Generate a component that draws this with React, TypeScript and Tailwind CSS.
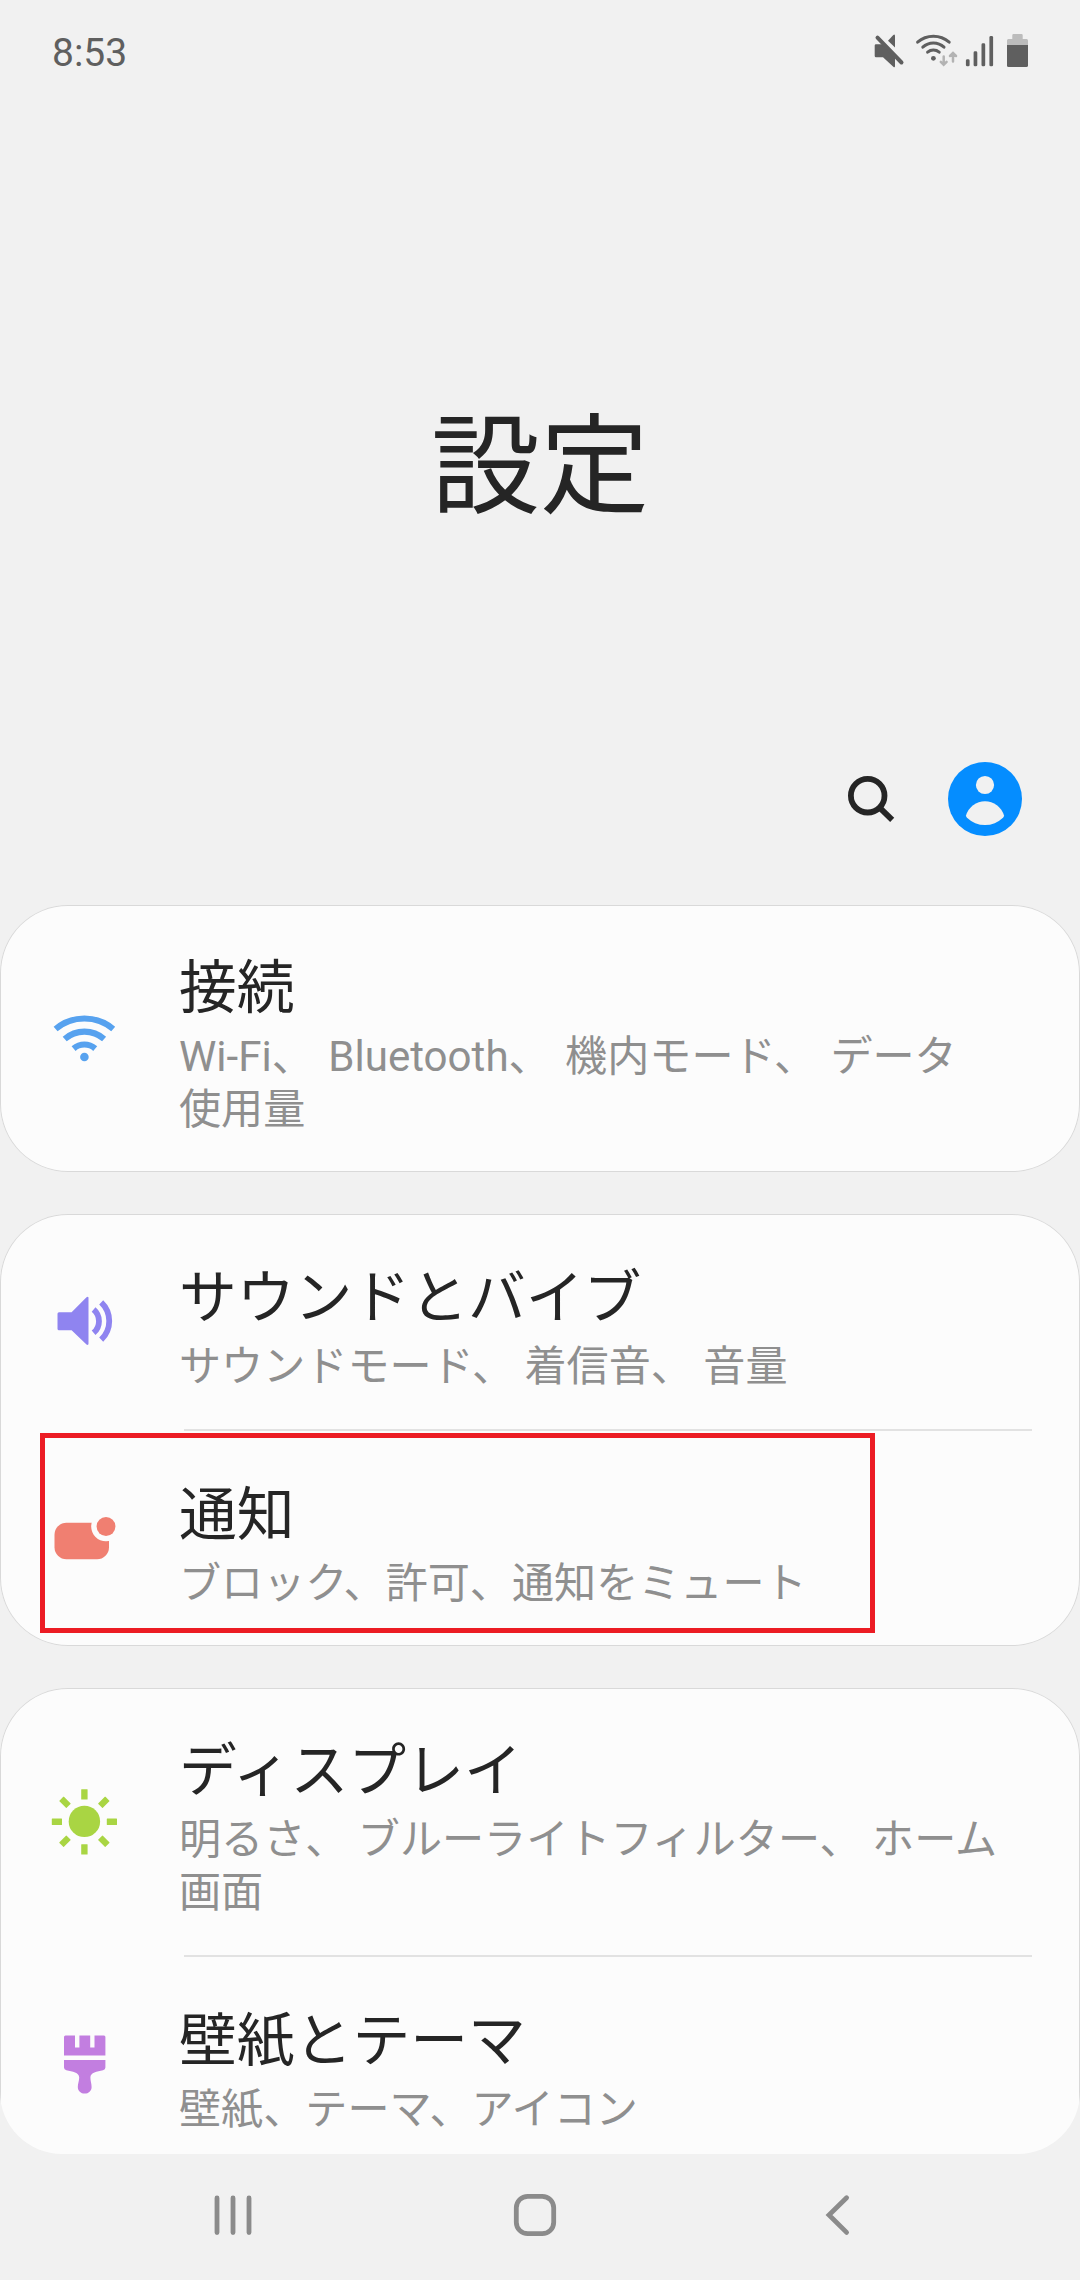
import type { ReactNode } from 'react';

interface SettingItem {
  title: string;
  summary: string;
  icon: ReactNode;
  tall?: boolean;
  wideSpaces?: boolean;
  highlighted?: boolean;
}

const WifiIcon = () => (
  <svg width="72" height="72" viewBox="0 0 72 72" fill="none" stroke="#57a2ef" strokeWidth="6.1">
    <path d="M7.6 27 A44.6 44.6 0 0 1 65.2 27" />
    <path d="M16.7 37 A30 30 0 0 1 56.1 37" />
    <path d="M25.6 46.6 A16.5 16.5 0 0 1 47.2 46.6" />
    <circle cx="36.4" cy="55" r="4.3" fill="#57a2ef" stroke="none" />
  </svg>
);

const SoundIcon = () => (
  <svg width="72" height="72" viewBox="0 0 72 72" fill="none" stroke="#8f84f0" strokeWidth="5.8">
    <path d="M11 27.2H23.6L38.5 12.3Q40.5 11 40.5 13V58.5Q40.5 60.8 38.5 59.5L23.6 45.2H11Q9.5 45.2 9.5 43.7V28.7Q9.5 27.2 11 27.2Z" fill="#8f84f0" stroke="none" />
    <path d="M45.6 24.5 A15.3 15.3 0 0 1 45.6 47.8" />
    <path d="M53.2 17.3 A25.8 25.8 0 0 1 53.2 54.7" />
  </svg>
);

const NotificationIcon = () => (
  <svg width="72" height="72" viewBox="0 0 72 72">
    <rect x="6.5" y="20.8" width="54.5" height="36.4" rx="12" fill="#f07f71" />
    <circle cx="58" cy="24.5" r="14.8" fill="#fcfcfc" />
    <circle cx="58" cy="24.5" r="9.4" fill="#f07f71" />
  </svg>
);

const rayAngles = [0, 45, 90, 135, 180, 225, 270, 315];

const DisplayIcon = () => (
  <svg width="72" height="72" viewBox="0 0 72 72" fill="#a9d543">
    <circle cx="36.4" cy="36.4" r="15.7" />
    {rayAngles.map((angle) => (
      <rect key={angle} x="33.2" y="4.2" width="6.4" height="10.2" rx="0.5" transform={`rotate(${angle} 36.4 36.8)`} />
    ))}
  </svg>
);

const BrushIcon = () => (
  <svg width="72" height="72" viewBox="0 0 72 72" fill="#c27ee0">
    <path d="M17.5 7.5H27V19.5H31.4V7.5H42.2V19.5H46.5V7.5H56Q57.4 7.5 57.4 9V27.5H16V9Q16 7.5 17.5 7.5Z" />
    <path d="M16 32H57.4V39.5Q57.4 41.5 55 42.2C49 43.3 42.4 44.5 42.4 49.5C42.4 53.5 43.6 55 43.6 59C43.6 63 40.5 65.6 36.7 65.6C32.9 65.6 29.8 63 29.8 59C29.8 55 31.2 53.5 31.2 49.5C31.2 44.5 24.5 43.3 18.4 42.2Q16 41.5 16 39.5Z" />
  </svg>
);

const groups: SettingItem[][] = [
  [
    {
      title: '接続',
      summary: 'Wi-Fi、 Bluetooth、 機内モード、 データ\n使用量',
      icon: <WifiIcon />,
      tall: true,
      wideSpaces: true,
    },
  ],
  [
    { title: 'サウンドとバイブ', summary: 'サウンドモード、 着信音、 音量', icon: <SoundIcon /> },
    {
      title: '通知',
      summary: 'ブロック、許可、通知をミュート',
      icon: <NotificationIcon />,
      highlighted: true,
    },
  ],
  [
    {
      title: 'ディスプレイ',
      summary: '明るさ、 ブルーライトフィルター、 ホーム\n画面',
      icon: <DisplayIcon />,
      tall: true,
    },
    { title: '壁紙とテーマ', summary: '壁紙、テーマ、アイコン', icon: <BrushIcon /> },
  ],
];

function StatusBar() {
  return (
    <div className="flex h-[70px] items-end justify-between pr-12 pl-[52px]">
      <span className="text-[39px] leading-[34px] text-[#5f5f5f]">8:53</span>
      <div className="flex gap-1">
        {/* Muted speaker */}
        <svg width="36" height="40" viewBox="0 0 36 40" fill="#5f5f5f">
          <path d="M4 14.3H11L23 26V36Q23 38.3 21.3 36.7L11 27.3H4Q2.7 27.3 2.7 26V15.6Q2.7 14.3 4 14.3Z" />
          <path d="M16 10.8L21.3 5Q23 3.6 23 6V17.5Z" />
          <path d="M5.5 7.6L29.5 32.5" stroke="#5f5f5f" strokeWidth="4" strokeLinecap="round" />
        </svg>
        {/* Wi-Fi with traffic arrows */}
        <svg width="48" height="40" viewBox="0 0 48 40" fill="none" stroke="#5f5f5f" strokeWidth="3" strokeLinecap="round">
          <path d="M5.6 12.2 A24 24 0 0 1 37.2 12.2" />
          <path d="M10.8 17.2 A15.5 15.5 0 0 1 32 17.2" />
          <path d="M15.6 22.2 A9 9 0 0 1 27.2 22.2" />
          <circle cx="21.4" cy="28.3" r="2.4" fill="#5f5f5f" stroke="none" />
          <g stroke="#b3b3b3" strokeWidth="2.5">
            <path d="M31.7 26.5V34M28.8 31.8L31.7 34.8L34.6 31.8" />
            <path d="M41 31.5V24M38 26L41 23L44 26" />
          </g>
        </svg>
        {/* Cell signal */}
        <svg width="32" height="40" viewBox="0 0 32 40" fill="#5f5f5f">
          <rect x="1.9" y="29.3" width="3.7" height="7" rx="1.4" />
          <rect x="9.6" y="21.3" width="3.7" height="15" rx="1.4" />
          <rect x="17.5" y="13.3" width="3.7" height="23" rx="1.4" />
          <rect x="25.4" y="6" width="3.7" height="30.3" rx="1.4" />
        </svg>
        {/* Battery */}
        <svg width="32" height="40" viewBox="0 0 32 40">
          <path d="M13.5 4H21.5Q22.7 4 22.7 5.2V9H26.6Q28 9 28 10.5V15H7V10.5Q7 9 8.4 9H12.3V5.2Q12.3 4 13.5 4Z" fill="#bcbcbc" />
          <path d="M7 15H28V35.4Q28 37 26.4 37H8.6Q7 37 7 35.4Z" fill="#5f5f5f" />
        </svg>
      </div>
    </div>
  );
}

function SettingRow({ title, summary, icon, tall, wideSpaces, highlighted }: SettingItem) {
  return (
    <div className={`relative flex shrink-0 items-center gap-[59px] pl-12 ${tall ? 'h-[267px]' : 'h-[215px]'}`}>
      <div className="shrink-0 pb-[2px]">{icon}</div>
      <div className="pt-[5px]">
        <h2 className="text-[57.8px] leading-[84px] text-[#252525]">{title}</h2>
        <p
          className={`text-[42.1px] leading-[53px] whitespace-pre-line text-[#8f8f8f] ${wideSpaces ? '[word-spacing:4px]' : ''}`}
        >
          {summary}
        </p>
      </div>
      {highlighted && <div className="absolute top-[2px] left-10 h-[200px] w-[835px] border-5 border-[#ec1c24]" />}
    </div>
  );
}

function SettingGroup({ items, last }: { items: SettingItem[]; last: boolean }) {
  return (
    <section
      className={`flex shrink-0 flex-col bg-[#fcfcfc] shadow-[inset_0_0_0_1px_#d9d9d9] ${last ? 'rounded-t-[68px]' : 'rounded-[68px]'}`}
    >
      {items.map((item, index) => (
        <div key={item.title}>
          {index > 0 && <div className="mr-12 ml-46 h-[2px] bg-[#e2e2e2]" />}
          <SettingRow {...item} />
        </div>
      ))}
    </section>
  );
}

function NavigationBar() {
  return (
    <nav className="flex h-[126px] items-center pb-1 pl-[213px]">
      <svg width="40" height="44" viewBox="0 0 40 44" stroke="#8b8b8b" strokeWidth="4.8" strokeLinecap="round">
        <path d="M4 5V39.5M20 5V39.5M36 5V39.5" />
      </svg>
      <svg className="ml-[260px]" width="44" height="44" viewBox="0 0 44 44" fill="none" stroke="#8b8b8b" strokeWidth="4.8">
        <rect x="3.3" y="3.3" width="37.4" height="37.4" rx="11.5" />
      </svg>
      <svg className="ml-[265px]" width="32" height="44" viewBox="0 0 32 44" fill="none" stroke="#8b8b8b" strokeWidth="4.8" strokeLinecap="round">
        <path d="M24.6 4.8L7 22L24.6 39.4" />
      </svg>
    </nav>
  );
}

export default function App() {
  return (
    <div
      lang="ja"
      className="flex h-[2280px] w-[1080px] flex-col overflow-hidden bg-[#f1f1f1] font-['Roboto','Noto_Sans_CJK_JP',sans-serif]"
    >
      <StatusBar />

      <header className="flex h-[835px] flex-col">
        <h1 className="pt-[318px] text-center text-[109px] leading-[160px] text-[#252525]">設定</h1>
        <div className="mt-auto mr-[58px] mb-[69px] flex items-center justify-end gap-[53px]">
          <svg width="48" height="48" viewBox="0 0 48 48" fill="none" stroke="#252525" strokeWidth="5.8">
            <circle cx="20.7" cy="20.7" r="16.8" />
            <path d="M31.8 31.8L45.2 44.8" />
          </svg>
          <svg width="74" height="74" viewBox="0 0 74 74" fill="#f1f1f1">
            <circle cx="37" cy="37" r="37" fill="#058dff" />
            <circle cx="37" cy="23" r="9.1" />
            <path d="M18 53.5 A19.8 19.8 0 0 1 56 53.5 Q56 54.8 55 55.8 A26 26 0 0 1 19 55.8 Q18 54.8 18 53.5Z" />
          </svg>
        </div>
      </header>

      <main className="flex h-[1249px] flex-col gap-[42px] overflow-hidden rounded-b-[62px]">
        {groups.map((items, index) => (
          <SettingGroup key={items[0].title} items={items} last={index === groups.length - 1} />
        ))}
      </main>

      <NavigationBar />
    </div>
  );
}
